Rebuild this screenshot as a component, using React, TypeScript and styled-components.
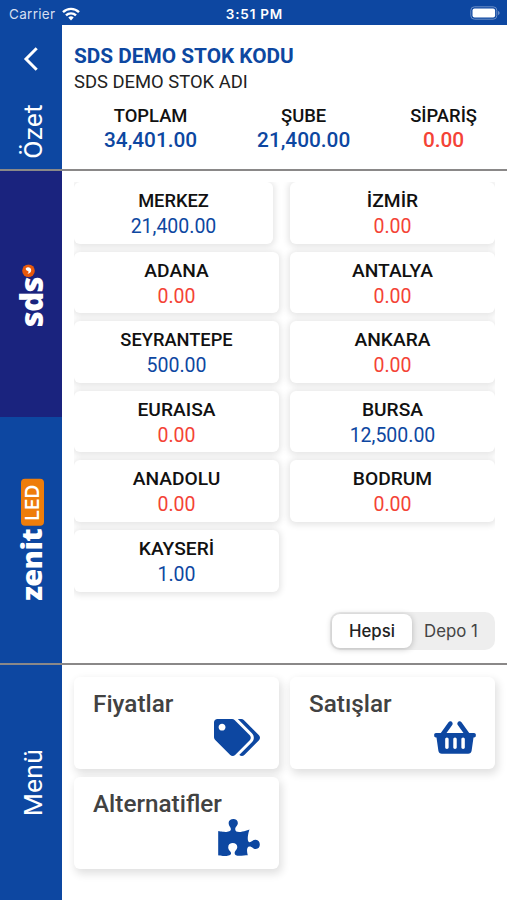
import styled, { createGlobalStyle } from "styled-components";
import { FaPuzzlePiece, FaShoppingBasket, FaTags } from "react-icons/fa";

const GlobalStyle = createGlobalStyle`
  * {
    box-sizing: border-box;
  }
  body {
    margin: 0;
    background: #ffffff;
    font-family: Roboto, "Noto Sans", sans-serif;
  }
`;

const Screen = styled.div`
  width: 507px;
  height: 900px;
  display: flex;
  flex-direction: column;
  overflow: hidden;
`;

const StatusBar = styled.header`
  flex: 0 0 25px;
  display: grid;
  grid-template-columns: 1fr auto 1fr;
  align-items: center;
  padding: 3px 7px 0 9px;
  background: #0d47a1;
  color: #ffffff;
  font-family: Inter, sans-serif;
  font-size: 13.5px;
  line-height: 22px;

  .carrier {
    display: flex;
    align-items: center;
    gap: 7px;
    color: #d5dff0;
    letter-spacing: 0.3px;
  }
  .time {
    font-weight: 600;
    font-size: 13.5px;
    letter-spacing: 0.8px;
  }
  .battery {
    justify-self: end;
    display: block;
    margin-top: -2px;
  }
`;

const Section = styled.section<{ $height: number; $line?: boolean }>`
  flex: 0 0 ${(p) => p.$height}px;
  display: flex;
  border-bottom: ${(p) => (p.$line ? "2px solid #8a8888" : "none")};
`;

const Side = styled.aside`
  flex: 0 0 62px;
  display: flex;
  flex-direction: column;
  background: #0d47a1;
`;

const Tab = styled.div<{ $color?: string; $bottom?: number }>`
  flex: 1 1 0;
  min-height: 0;
  display: flex;
  flex-direction: column;
  align-items: center;
  justify-content: flex-end;
  background: ${(p) => p.$color ?? "#0d47a1"};

  > span {
    margin-bottom: ${(p) => p.$bottom ?? 0}px;
  }
`;

const BackIcon = styled.svg`
  display: block;
  margin: 22px 0 0 23px;
`;

const Vertical = styled.span`
  margin-left: 3px;
  writing-mode: vertical-rl;
  transform: rotate(180deg);
  color: #ffffff;
  font-size: 26.5px;
  line-height: 28px;
  letter-spacing: 0.2px;
`;

const Logo = styled(Vertical)<{ $size: number; $spacing: number }>`
  display: flex;
  align-items: center;
  margin-left: 0;
  font-family: "Open Sans", sans-serif;
  font-weight: 800;
  font-size: ${(p) => p.$size}px;
  line-height: 34px;
  letter-spacing: ${(p) => p.$spacing}px;
`;

const SdsMark = styled.svg`
  display: block;
  align-self: flex-start;
  margin: 0 8px 0 0;
`;

const LedBadge = styled.span`
  display: flex;
  align-items: center;
  justify-content: center;
  width: 23px;
  height: 47px;
  margin: 3px 3px 0 0;
  border-radius: 4px;
  background: #ee7d0b;
  color: #ffffff;
  font-family: Inter, sans-serif;
  font-weight: 600;
  font-size: 19px;
  line-height: 23px;
  letter-spacing: 0;
`;

const Summary = styled.div`
  flex: 1;
  padding: 18px 12px 0;

  h1 {
    margin: 0;
    color: #0d47a1;
    font-size: 20.8px;
    line-height: 26px;
    font-weight: 700;
  }
  p {
    margin: 0;
    color: #222222;
    font-size: 18.4px;
    line-height: 25px;
  }
`;

const Totals = styled.div`
  display: flex;
  justify-content: space-between;
  padding: 10px 18px 0 30px;
`;

const Total = styled.div<{ $red?: boolean }>`
  text-align: center;
  font-weight: 500;
  font-size: 18.4px;
  line-height: 24px;
  color: #111111;

  strong {
    display: block;
    font-size: 20.8px;
    font-weight: 500;
    color: ${(p) => (p.$red ? "#f44336" : "#0d47a1")};
  }
`;

const Stock = styled.div`
  flex: 1;
  padding: 11px 12px 0;
`;

const DepotList = styled.div`
  display: grid;
  grid-template-columns: 205px 205px;
  grid-auto-rows: 61.6px;
  gap: 8px 11px;
  height: 422px;
  overflow: hidden;
`;

const Depot = styled.div<{ $tone: "blue" | "red"; $narrow?: boolean; $small?: boolean }>`
  margin-right: ${(p) => (p.$narrow ? 6 : 0)}px;
  padding-top: 6px;
  border-radius: 6px;
  background: #ffffff;
  box-shadow: 0 1px 6px 2px rgba(0, 0, 0, 0.1);
  text-align: center;
  font-size: ${(p) => (p.$small ? 18.3 : 19.2)}px;
  line-height: 25px;
  font-weight: 500;
  color: #111111;

  span {
    display: block;
    font-size: 19.5px;
    line-height: 27px;
    font-weight: 400;
    color: ${(p) => (p.$tone === "red" ? "#f44336" : "#0d47a1")};
  }
`;

const Segments = styled.div`
  display: flex;
  width: 165px;
  height: 38px;
  margin: 8px 0 0 auto;
  padding: 2px;
  border-radius: 10px;
  background: #eeeeee;
`;

const Segment = styled.button<{ $active?: boolean }>`
  flex: ${(p) => (p.$active ? "0 0 80px" : "1")};
  padding: ${(p) => (p.$active ? "0" : "0 3px 0 0")};
  border: none;
  border-radius: 8px;
  background: ${(p) => (p.$active ? "#ffffff" : "transparent")};
  box-shadow: ${(p) => (p.$active ? "0 1px 6px rgba(0, 0, 0, 0.24)" : "none")};
  color: ${(p) => (p.$active ? "#222222" : "#444444")};
  font-family: Inter, sans-serif;
  font-size: 16.8px;
  font-weight: ${(p) => (p.$active ? 500 : 400)};
`;

const MenuGrid = styled.div`
  flex: 1;
  display: grid;
  grid-template-columns: 205px 205px;
  grid-auto-rows: 92px;
  gap: 8px 11px;
  padding: 12px 12px 0;
`;

const MenuCard = styled.div<{ $iconWidth: number }>`
  display: flex;
  flex-direction: column;
  justify-content: space-between;
  padding: 11px 19px 13px 19px;
  border-radius: 6px;
  background: #ffffff;
  box-shadow: 2px 4px 9px 1px rgba(0, 0, 0, 0.12);
  color: #424242;
  font-size: 24.3px;
  line-height: 31px;
  font-weight: 500;

  svg {
    flex: none;
    align-self: flex-end;
    height: 37px;
    width: ${(p) => p.$iconWidth}px;
    color: #0d47a1;
  }
`;

type DepotItem = { name: string; value: string; narrow?: boolean; small?: boolean };

const depots: DepotItem[] = [
  { name: "MERKEZ", value: "21,400.00", narrow: true, small: true },
  { name: "İZMİR", value: "0.00" },
  { name: "ADANA", value: "0.00" },
  { name: "ANTALYA", value: "0.00" },
  { name: "SEYRANTEPE", value: "500.00", small: true },
  { name: "ANKARA", value: "0.00" },
  { name: "EURAISA", value: "0.00" },
  { name: "BURSA", value: "12,500.00" },
  { name: "ANADOLU", value: "0.00" },
  { name: "BODRUM", value: "0.00" },
  { name: "KAYSERİ", value: "1.00" },
];

const menu = [
  { label: "Fiyatlar", icon: <FaTags />, iconWidth: 46 },
  { label: "Satışlar", icon: <FaShoppingBasket />, iconWidth: 42 },
  { label: "Alternatifler", icon: <FaPuzzlePiece />, iconWidth: 42 },
];

const App = () => {
  return (
    <Screen>
      <GlobalStyle />
      <StatusBar>
        <div className="carrier">
          Carrier
          <svg width="18" height="14" viewBox="0 0 18 14" fill="none" stroke="#ffffff" strokeWidth="2.4">
            <path d="M1 5.2a11.4 11.4 0 0 1 16 0" />
            <path d="M4 8.4a7.1 7.1 0 0 1 10 0" />
            <path d="M6.3 10.6a3.9 3.9 0 0 1 5.4 0L9 13.4z" fill="#ffffff" stroke="none" />
          </svg>
        </div>
        <div className="time">3:51 PM</div>
        <svg className="battery" width="30" height="14" viewBox="0 0 30 14">
          <rect x="0.8" y="0.8" width="26" height="12.4" rx="3.6" fill="none" stroke="#6c8ec6" />
          <rect x="2.5" y="2.5" width="22.6" height="9" rx="2" fill="#ffffff" />
          <path d="M28 5v4c1-.4 1.6-1.1 1.6-2s-.6-1.6-1.6-2z" fill="#6c8ec6" />
        </svg>
      </StatusBar>

      <Section $height={146} $line>
        <Side>
          <BackIcon width="16" height="24" viewBox="0 0 16 24" fill="none" stroke="#ffffff" strokeWidth="3">
            <path d="M13.7 1.2L3 12l10.7 10.8" />
          </BackIcon>
          <Tab $bottom={10}>
            <Vertical>Özet</Vertical>
          </Tab>
        </Side>
        <Summary>
          <h1>SDS DEMO STOK KODU</h1>
          <p>SDS DEMO STOK ADI</p>
          <Totals>
            <Total>
              TOPLAM<strong>34,401.00</strong>
            </Total>
            <Total>
              ŞUBE<strong>21,400.00</strong>
            </Total>
            <Total $red>
              SİPARİŞ<strong>0.00</strong>
            </Total>
          </Totals>
        </Summary>
      </Section>

      <Section $height={494} $line>
        <Side>
          <Tab $color="#1a237e" $bottom={90}>
            <Logo $size={31} $spacing={-0.6}>
              sds
              <SdsMark width="13" height="13" viewBox="0 0 13 13">
                <circle cx="6.5" cy="6.5" r="6.3" fill="#e8590c" />
                <path
                  d="M9.3 8.8C7.5 10.8 3.8 9.8 3.8 6.9c0-2 1.8-3.4 3.8-3.5-1.2 1-1.5 2-.6 2.7 1.2.5 2.3 1.2 2.3 2.7z"
                  fill="#ffffff"
                />
              </SdsMark>
            </Logo>
          </Tab>
          <Tab $bottom={62}>
            <Logo $size={29} $spacing={-0.6}>
              zenit
              <LedBadge>LED</LedBadge>
            </Logo>
          </Tab>
        </Side>
        <Stock>
          <DepotList>
            {depots.map((item) => {
              return (
                <Depot
                  key={item.name}
                  $tone={item.value === "0.00" ? "red" : "blue"}
                  $narrow={item.narrow}
                  $small={item.small}
                >
                  {item.name}
                  <span>{item.value}</span>
                </Depot>
              );
            })}
          </DepotList>
          <Segments>
            <Segment $active>Hepsi</Segment>
            <Segment>Depo 1</Segment>
          </Segments>
        </Stock>
      </Section>

      <Section $height={235}>
        <Side>
          <Tab $bottom={84}>
            <Vertical>Menü</Vertical>
          </Tab>
        </Side>
        <MenuGrid>
          {menu.map((item) => {
            return (
              <MenuCard key={item.label} $iconWidth={item.iconWidth}>
                {item.label}
                {item.icon}
              </MenuCard>
            );
          })}
        </MenuGrid>
      </Section>
    </Screen>
  );
};

export default App;
